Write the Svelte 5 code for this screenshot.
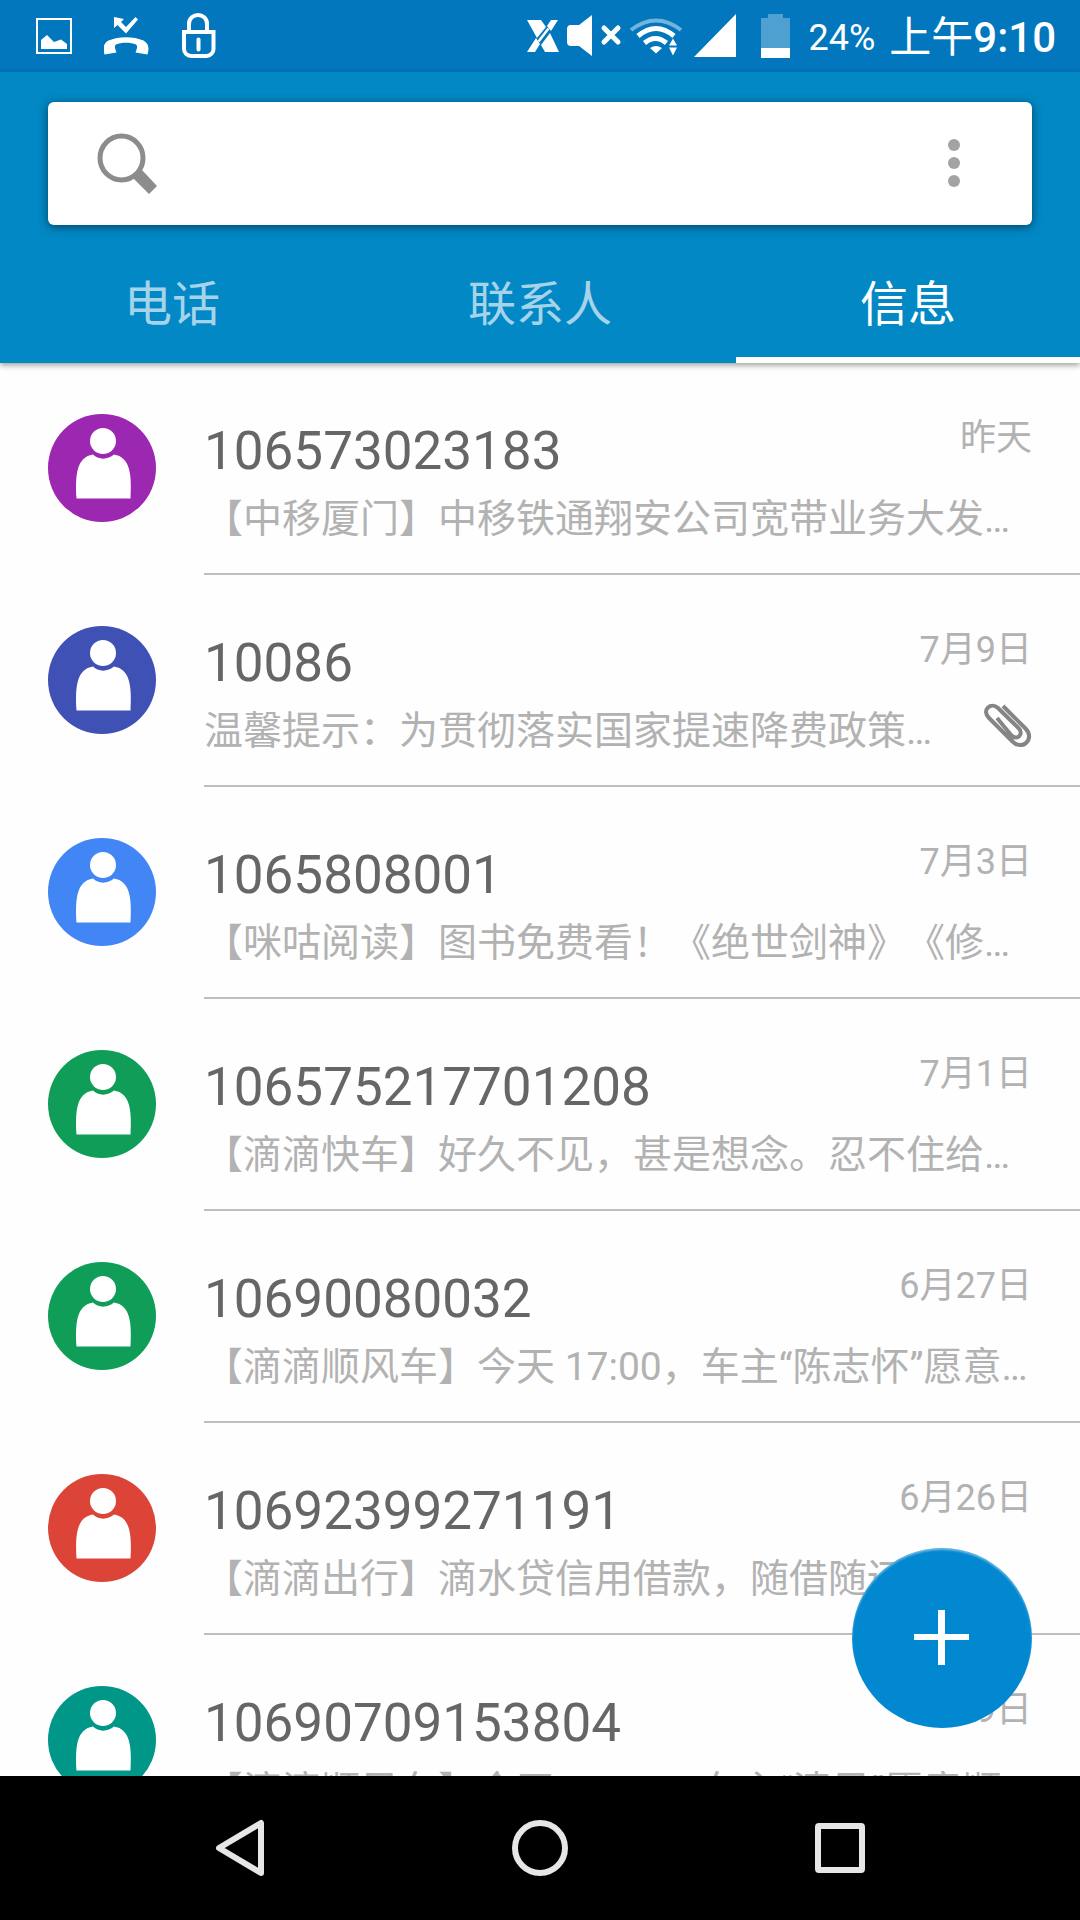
<script>
  let query = $state('');
  let active = $state(2);
  const tabs = ['电话', '联系人', '信息'];
  const messages = [
    { from: '106573023183', date: '昨天', tone: 'purple', text: '【中移厦门】中移铁通翔安公司宽带业务大发…' },
    { from: '10086', date: '7月9日', tone: 'indigo', text: '温馨提示：为贯彻落实国家提速降费政策…', clip: true },
    { from: '1065808001', date: '7月3日', tone: 'blue', text: '【咪咕阅读】图书免费看！《绝世剑神》《修…' },
    { from: '106575217701208', date: '7月1日', tone: 'green', text: '【滴滴快车】好久不见，甚是想念。忍不住给…' },
    { from: '10690080032', date: '6月27日', tone: 'green', text: '【滴滴顺风车】今天 17:00，车主“陈志怀”愿意…' },
    { from: '10692399271191', date: '6月26日', tone: 'red', text: '【滴滴出行】滴水贷信用借款，随借随还…' },
    { from: '10690709153804', date: '6月19日', tone: 'teal', text: '【滴滴顺风车】今天 17:00，车主“清风”愿意顺…' }
  ];
</script>

<div class="screen">
  <div class="status">
    <div class="notices">
      <svg width="36" height="72" viewBox="36 0 36 72" aria-hidden="true">
        <rect x="37" y="19" width="34" height="34" fill="none" stroke="#fff" stroke-width="2" />
        <path d="M41 40l6-5 7 7 7-2.500 6 4.500v5H41z" fill="#fff" />
      </svg>
      <svg width="46" height="72" viewBox="104 0 46 72" aria-hidden="true">
        <path d="M114 17l10 2-3 3 5 5 9.500-10 2.500 2.500-12 14-8.500-8.500-3.500 3z" fill="#fff" />
        <path d="M104.500 54.500c-2-7-1-11 4-14 10-4.500 25-4.500 35 0 5 3 6 7 4 14l-12-2c1.500-4 2.500-6.500.5-8-5-2.500-15-2.500-20 0-2 1.500-1 4 .5 8z" fill="#fff" />
      </svg>
      <svg width="34" height="72" viewBox="182 0 34 72" aria-hidden="true">
        <path d="M189 31v-7c0-12 18-12 18 0v7M184 32h29.500v17a7 7 0 0 1-7 7H191a7 7 0 0 1-7-7z" fill="none" stroke="#fff" stroke-width="4" />
        <path d="M198.500 39.500v10" stroke="#fff" stroke-width="4" stroke-linecap="round" />
      </svg>
    </div>
    <div class="signals">
      <svg width="264" height="72" viewBox="526 0 264 72" aria-hidden="true">
        <g fill="#fff">
          <path d="M527 20h14l5 7-9 11zM559 52h-14l-4-7 9-12z" />
          <path d="M551 20h7l-7 11-4-5zM527 52h8l5-8-4-6z" />
          <path d="M538.500 41.500l10-13" stroke="#fff" stroke-width="2.500" />
          <path d="M571 25h8l13-10v41l-13-10h-8a4 4 0 0 1-4-4V29a4 4 0 0 1 4-4z" />
          <path d="M694 57l42-43v43z" />
        </g>
        <path d="M604 28l14 14M618 28l-14 14" stroke="#fff" stroke-width="5" stroke-linecap="round" />
        <g fill="none" stroke="#fff" stroke-width="5">
          <path d="M631 30q25-19 50 0" stroke-width="4" opacity=".45" />
          <path d="M638 36q18-15 36 0" />
          <path d="M644.500 43q11-9 22 0" />
        </g>
        <path d="M650 48q6-4 12 0l-6 5.500zM673 38.500l4 7h-8zM673 55.500l4-8h-8z" fill="#fff" />
        <path d="M761 18h7v-4h15v4h7v30h-29z" fill="#fff" opacity=".3" />
        <path d="M761 48h29v10h-29z" fill="#fff" />
      </svg>
      <span class="battery">24%</span>
      <span class="clock">上午<b>9:10</b></span>
    </div>
  </div>

  <header>
    <label class="search">
      <svg width="60" height="62" viewBox="97 133 60 62" aria-hidden="true">
        <ellipse cx="121.500" cy="158" rx="21.500" ry="22" fill="none" stroke="#8c8c8c" stroke-width="5" />
        <path d="M133 178l8.500-8.500 15.500 16.500-8 8z" fill="#8c8c8c" />
      </svg>
      <input type="search" aria-label="搜索" bind:value={query} />
      <button class="more" aria-label="更多选项">
        <svg width="12" height="50" viewBox="0 0 12 50" fill="#a3a3a3"><circle cx="6" cy="6" r="6" /><circle cx="6" cy="24" r="6" /><circle cx="6" cy="42" r="6" /></svg>
      </button>
    </label>
    <nav class="tabs">
      {#each tabs as tab, i}
        <button class:active={active === i} onclick={() => (active = i)}>{tab}</button>
      {/each}
    </nav>
  </header>

  <main>
    <ul>
      {#each messages as m}
        <li>
          <svg class="avatar {m.tone}" viewBox="0 0 108 108" aria-hidden="true">
            <circle cx="54" cy="54" r="54" fill="currentColor" />
            <circle cx="55" cy="27" r="13" fill="#fff" />
            <path d="M28.500 84.500C27 60 29 43 45 40.500c5 5.500 15 5.500 21 0 16 2.500 18 19.500 16.500 44z" fill="#fff" />
          </svg>
          <div class="body">
            <div class="line">
              <span class="from">{m.from}</span>
              <time>{m.date}</time>
            </div>
            <div class="line">
              <p>{m.text}</p>
              {#if m.clip}
                <svg class="clip" width="48" height="46" viewBox="0 0 48 46" aria-label="附件">
                  <path d="M19 3l22.500 22.500c10 10-3 23-13 13L5 15C-3 7 7-1.500 14 5l20.500 20c6 6-1.500 13-7 7.500L13 15" fill="none" stroke="#858585" stroke-width="4" />
                </svg>
              {/if}
            </div>
          </div>
        </li>
      {/each}
    </ul>
    <button class="fab" aria-label="新建信息">
      <svg width="56" height="56" viewBox="0 0 56 56"><path d="M0 24h55v6H0zM24 0h7v55h-7z" fill="#fff" /></svg>
    </button>
  </main>

  <nav class="system">
    <button aria-label="返回">
      <svg width="60" height="60" viewBox="0 0 60 60"><path d="M51 5v50L9 30z" /></svg>
    </button>
    <button aria-label="主屏幕">
      <svg width="60" height="60" viewBox="0 0 60 60"><circle cx="30" cy="30" r="25" /></svg>
    </button>
    <button aria-label="最近任务">
      <svg width="60" height="60" viewBox="0 0 60 60"><rect x="8" y="8" width="44" height="44" rx="1" /></svg>
    </button>
  </nav>
</div>

<style>
  :global(body) {
    margin: 0;
  }
  .screen {
    height: 100vh;
    display: flex;
    flex-direction: column;
    background: #fefefe;
    font-family: Roboto, 'Noto Sans CJK SC', sans-serif;
    text-spacing-trim: space-all;
  }
  svg {
    display: block;
    flex: none;
  }
  button {
    border: 0;
    padding: 0;
    background: none;
    font: inherit;
    color: inherit;
    cursor: pointer;
  }
  .status {
    display: flex;
    justify-content: space-between;
    padding: 0 24px 0 36px;
    height: 72px;
    flex: none;
    background: #0277bd;
    color: #fff;
  }
  .notices {
    display: flex;
    gap: 32px;
  }
  .signals {
    display: flex;
    align-items: center;
  }
  .battery {
    margin-left: 18px;
    padding-top: 3px;
    font-size: 36px;
  }
  .clock {
    margin-left: 14px;
    padding-top: 3px;
    font-size: 42px;
    line-height: 48px;
  }
  .clock b {
    font-weight: 500;
  }
  header {
    position: relative;
    z-index: 1;
    flex: none;
    padding-top: 30px;
    background: #0288c4;
    box-shadow: 0 2px 6px rgba(0, 0, 0, 0.4);
  }
  .search {
    display: flex;
    align-items: center;
    margin: 0 48px 12px;
    padding: 0 42px 0 49px;
    height: 123px;
    background: #fff;
    border-radius: 6px;
    box-shadow: 0 2px 10px rgba(0, 0, 0, 0.5);
  }
  .search input {
    flex: 1;
    min-width: 0;
    height: 72px;
    padding: 0 24px;
    border: 0;
    outline: 0;
    background: none;
    font: inherit;
    font-size: 42px;
    color: #666;
  }
  .more {
    display: flex;
    justify-content: center;
    align-items: center;
    width: 72px;
    height: 72px;
  }
  .tabs {
    display: flex;
  }
  .tabs button {
    flex: 1 1 auto;
    height: 126px;
    font-size: 48px;
    color: #a5d4ea;
  }
  .tabs button.active {
    color: #fff;
    box-shadow: inset 0 -6px #fff;
  }
  main {
    position: relative;
    flex: 1;
    min-height: 0;
    overflow: hidden;
  }
  ul {
    margin: 0;
    padding: 0;
    list-style: none;
  }
  li {
    display: flex;
    padding-left: 48px;
  }
  .avatar {
    width: 108px;
    height: 108px;
    margin: 51px 48px 0 0;
  }
  .purple { color: #9c27b0; }
  .indigo { color: #3f51b5; }
  .blue { color: #4285f4; }
  .green { color: #0f9d58; }
  .red { color: #db4437; }
  .teal { color: #009688; }
  .body {
    flex: 1;
    min-width: 0;
    display: flex;
    flex-direction: column;
    gap: 8px;
    padding: 56px 48px 26px 0;
    border-bottom: 2px solid #bfbfbf;
  }
  .line {
    display: flex;
    justify-content: space-between;
    align-items: flex-start;
  }
  .from {
    font-size: 53px;
    line-height: 64px;
    color: #666;
  }
  time {
    font-size: 36px;
    line-height: 38px;
    color: #b2b2b2;
  }
  p {
    margin: 0;
    min-width: 0;
    overflow: hidden;
    white-space: nowrap;
    font-size: 39px;
    line-height: 56px;
    color: #b2b2b2;
  }
  .fab {
    position: absolute;
    right: 48px;
    bottom: 48px;
    width: 180px;
    height: 180px;
    border-radius: 50%;
    background: #0288d1;
    display: flex;
    justify-content: center;
    align-items: center;
    box-shadow: inset 0 2px 2px rgba(255, 255, 255, 0.4);
  }
  .system {
    flex: none;
    display: flex;
    justify-content: center;
    height: 144px;
    background: #000;
  }
  .system button {
    flex: 0 1 300px;
    display: flex;
    justify-content: center;
    align-items: center;
  }
  .system svg {
    fill: none;
    stroke: #e6e6e6;
    stroke-width: 6;
    stroke-linejoin: round;
  }
</style>
